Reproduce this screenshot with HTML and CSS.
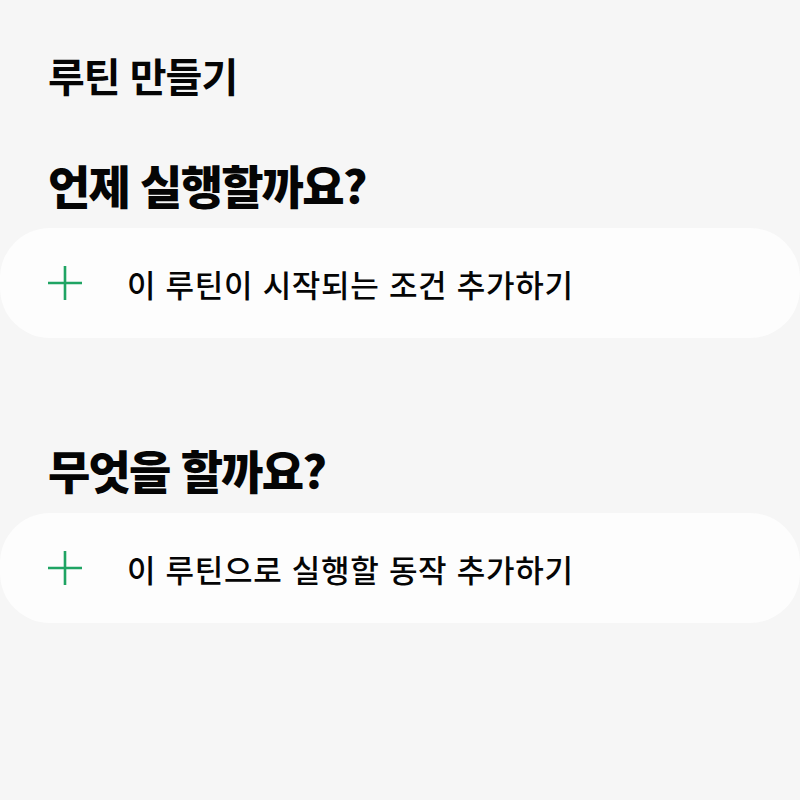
FILE: index.html
```html
<!DOCTYPE html>
<html lang="ko">
<head>
  <meta charset="UTF-8">
  <meta name="viewport" content="width=device-width, initial-scale=1.0">
  <title>루틴 만들기</title>
  <link rel="stylesheet" href="styles.css">
</head>
<body>
  <div id="wrap" class="routine-page">
    <h1 class="page-title">루틴 만들기</h1>

    <div class="section">
      <h2 class="section-title">언제 실행할까요?</h2>
      <div class="add-card">
        <span class="plus"><svg width="34" height="34" viewBox="0 0 34 34"><path d="M17 0V34M0 17H34" stroke="#1fa463" stroke-width="2.6" fill="none"/></svg></span>
        <span class="txt">이 루틴이 시작되는 조건 추가하기</span>
      </div>
    </div>

    <div class="section">
      <h2 class="section-title">무엇을 할까요?</h2>
      <div class="add-card">
        <span class="plus"><svg width="34" height="34" viewBox="0 0 34 34"><path d="M17 0V34M0 17H34" stroke="#1fa463" stroke-width="2.6" fill="none"/></svg></span>
        <span class="txt">이 루틴으로 실행할 동작 추가하기</span>
      </div>
    </div>
  </div>
</body>
</html>
```

FILE: styles.css
```css
* {margin:0; padding:0; box-sizing:border-box}
body {background:#f6f6f6; color:#050505; font-family:"Noto Sans CJK KR", "Noto Sans", sans-serif;}
.routine-page {padding-top:50px;}
.page-title {padding:0 48px; font-size:40px; line-height:50px; font-weight:700; letter-spacing:-1px;}
.section {margin-top:56px;}
.section + .section {margin-top:103px;}
.section-title {padding:0 48px; font-size:46px; line-height:56px; font-weight:800; letter-spacing:-1.8px;}
.add-card {display:flex; align-items:center; margin-top:16px; height:110px; padding-left:48px; border-radius:50px; background:#fdfdfd;}
.add-card .plus {display:flex; width:34px; height:34px; margin-right:45px;}
.add-card .txt {font-size:31px; font-weight:500; letter-spacing:0.7px;}
```
